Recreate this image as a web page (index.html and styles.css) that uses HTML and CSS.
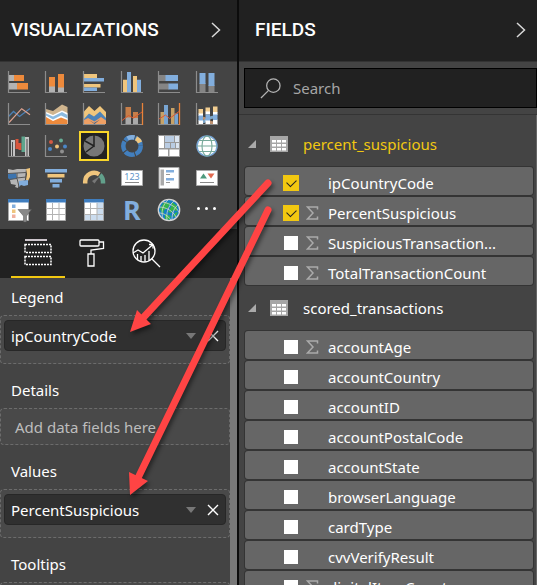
FILE: index.html
```html
<!DOCTYPE html>
<html lang="en">
<head>
<meta charset="utf-8">
<meta name="viewport" content="width=device-width, initial-scale=1">
<title>Report editor</title>
<link rel="stylesheet" href="styles.css">
</head>
<body>
<svg class="defs" width="0" height="0" aria-hidden="true">
  <symbol id="sigma" viewBox="0 0 13 14"><path d="M11.5 3.5V1H1.5L7 7 1.5 13h10v-2.500" fill="none" stroke="currentColor" stroke-width="1.500"/></symbol>
  <symbol id="chevron" viewBox="0 0 12 18"><path d="M2 2l7.500 7L2 16" fill="none" stroke="currentColor" stroke-width="1.500"/></symbol>
  <symbol id="grid" viewBox="0 0 18 16"><path fill="#a6a6a6" d="M0 0h18v16H0z"/><path fill="#fff" d="M2 4h4v2.500H2zM7 4h4v2.500H7zM12 4h4v2.500h-4zM2 8h4v2.500H2zM7 8h4v2.500H7zM12 8h4v2.500h-4zM2 12h4v2.500H2zM7 12h4v2.500H7zM12 12h4v2.500h-4z"/></symbol>
  <symbol id="axis" viewBox="0 0 24 24"><path d="M1.500 1v21.500H23" fill="none" stroke="#8c8c8c" stroke-width="1.200"/></symbol>
  <symbol id="close" viewBox="0 0 12 12"><path d="M1 1l10 10M11 1L1 11" fill="none" stroke="currentColor" stroke-width="1.400"/></symbol>
</svg>

<main class="app">
  <section class="panel visuals">
    <header class="panel-head">
      <h2>VISUALIZATIONS</h2>
      <button class="plain" aria-label="Collapse visualizations"><svg class="chevron"><use href="#chevron"/></svg></button>
    </header>

    <div class="gallery">
      <button class="viz" aria-label="Stacked bar chart"><svg viewBox="0 0 24 24"><path fill="#b3b3b3" d="M2 5h5v6H2zM2 13h8v6.500H2z"/><path fill="#ed8a3c" d="M7 5h10v6H7zM10 13h11v6.500H10z"/><use href="#axis"/></svg></button>
      <button class="viz" aria-label="Stacked column chart"><svg viewBox="0 0 24 24"><path fill="#b3b3b3" d="M5 16h6v6H5zM14 17h6v5h-6z"/><path fill="#ed8a3c" d="M5 7h6v9.500H5zM14 4h6v13.500h-6z"/><use href="#axis"/></svg></button>
      <button class="viz" aria-label="Clustered bar chart"><svg viewBox="0 0 24 24"><path fill="#efc57d" d="M2 4h13v4H2zM2 14h16.500v3.500H2z"/><path fill="#82aedd" d="M2 8h20v3.500H2zM2 17.500h13V21H2z"/><use href="#axis"/></svg></button>
      <button class="viz" aria-label="Clustered column chart"><svg viewBox="0 0 24 24"><path fill="#efc57d" d="M3 9.700h4V22H3zM13 6h4v16h-4z"/><path fill="#82aedd" d="M7 2h4v20H7zM17 9.700h4V22h-4z"/><use href="#axis"/></svg></button>
      <button class="viz" aria-label="100% stacked bar chart"><svg viewBox="0 0 24 24"><path fill="#858585" d="M2 5h7v6H2zM2 13.500h10v6H2z"/><path fill="#82aedd" d="M8.500 5H21v6H8.500zM11.500 13.500H21v6h-9.500z"/><use href="#axis"/></svg></button>
      <button class="viz" aria-label="100% stacked column chart"><svg viewBox="0 0 24 24"><path fill="#858585" d="M4.500 13h6v9h-6zM13.500 15h6v7h-6z"/><path fill="#82aedd" d="M4.500 3h6v11h-6zM13.500 3h6v13h-6z"/><use href="#axis"/></svg></button>

      <button class="viz" aria-label="Line chart"><svg viewBox="0 0 24 24"><path d="M1.500 14.500l5-5 6 5 10.500-8" fill="none" stroke="#4d80b5" stroke-width="1.300"/><path d="M2 20.500L14.700 6.700l8.300 6" fill="none" stroke="#dda290" stroke-width="1.200"/><use href="#axis"/></svg></button>
      <button class="viz" aria-label="Area chart"><svg viewBox="0 0 24 24"><path fill="#d0b58e" d="M2 7l7 2 9-6.500L23.500 5v17H2z"/><path fill="#fff" d="M2 10l7 3 9-4.500 5.500 2.500v11H2z"/><path fill="#8cbbe0" d="M2 11.500l7 3 9-4.500 5.500 3v9H2z"/><path fill="#fff" d="M2 13.500l7 4 8-4 6.500 3V22H2z"/><path fill="#ed8a3c" d="M2 15l7 4 8-3.500 6.500 2.500v4H2z"/><use href="#axis"/></svg></button>
      <button class="viz" aria-label="Stacked area chart"><svg viewBox="0 0 24 24"><path fill="#f0c67c" d="M2 9.500L7 4l5.500 5L18 4l6 6v11H2z"/><path fill="#4d83b8" d="M2 17l5-5.500 5 3 6-5 6 6.500v6H2z"/><path fill="#efa064" d="M2 22v-4l4-2 6.500 3.500L19 15l5 3.500V22z"/><path fill="#315f94" d="M7 18l5 3 6-3.500-5.500 4.500z"/><use href="#axis"/></svg></button>
      <button class="viz" aria-label="Line and stacked column chart"><svg viewBox="0 0 24 24"><path fill="#c77e49" d="M5.500 5h5.500v11H5.500zM13 10h5v7h-5z"/><path fill="#aaa" d="M5.500 15.500h5.500V22H5.500zM13 16h5v6h-5z"/><path d="M2 18.500l6.500-5 5 2.500L22 10" fill="none" stroke="#d9572e"/><use href="#axis"/><path stroke="#e8833a" stroke-width="1.300" d="M22.500 1v22"/></svg></button>
      <button class="viz" aria-label="Line and clustered column chart"><svg viewBox="0 0 24 24"><path fill="#c7a267" d="M3.500 10H7v12H3.500zM14 6h3.500v16H14z"/><path fill="#78a5d3" d="M7 3h4v19H7zM17.500 11.500h3.500V22h-3.500z"/><path d="M2 17l6.500-4 4 3.500L22 9.500" fill="none" stroke="#e05a32"/><use href="#axis"/><path stroke="#e8833a" stroke-width="1.300" d="M22.500 1v22"/></svg></button>
      <button class="viz" aria-label="Ribbon chart"><svg viewBox="0 0 24 24"><path d="M7 16c6 0 5 5 12 5" fill="none" stroke="#bf9270" stroke-width="3"/><path d="M6 20c6 0 7-5 13-5" fill="none" stroke="#7da7ca" stroke-width="3"/><path fill="#f2ce91" d="M3.500 7h4.500v5H3.500zM10.500 5.500H15V10h-4.500zM18 4.500h4.500v6H18z"/><path fill="#fff" d="M3.500 11.500h4.500V14H3.500zM10.500 9.500H15v3h-4.500zM18 10h4.500v3H18zM3.500 18h4.500v4H3.500zM10.500 18H15v4h-4.500zM18 17.500h4.500V22H18z"/><path fill="#82aedd" d="M3.500 13.500h4.500v5H3.500zM10.500 12.500H15v6h-4.500zM18 12.500h4.500v5.500H18z"/><use href="#axis"/></svg></button>

      <button class="viz" aria-label="Waterfall chart"><svg viewBox="0 0 24 24"><path fill="#c3c3c3" d="M4 6h4v16H4zM18 3h4v19h-4z"/><path fill="#4a4a4a" d="M5 8h1v14H5zM19.500 5h1v17h-1z"/><path fill="#d8563d" d="M8.500 5h3v10h-3zM11.500 9h3v7h-3z"/><path fill="#5fa58d" d="M14.500 2.500h3.500V18h-3.500z"/><use href="#axis"/></svg></button>
      <button class="viz" aria-label="Scatter chart"><svg viewBox="0 0 24 24"><circle cx="7" cy="8" r="2" fill="#d35a43"/><circle cx="17" cy="6.500" r="2" fill="#67ae96"/><circle cx="6" cy="15" r="2" fill="#4b86c6"/><circle cx="13" cy="12.500" r="2" fill="#efc27a"/><circle cx="21" cy="12.500" r="2" fill="#4b86c6"/><circle cx="18" cy="17.500" r="2" fill="#8f8f8f"/><use href="#axis"/></svg></button>
      <button class="viz selected" aria-label="Pie chart" aria-pressed="true"><svg viewBox="0 0 24 24"><circle cx="12" cy="12" r="10.500" fill="#777"/><path d="M12 1v11L3 7M12 12l-8 6" fill="none" stroke="#222" stroke-width="1.500"/></svg></button>
      <button class="viz" aria-label="Donut chart"><svg viewBox="0 0 24 24"><g fill="none" stroke-width="4.500" stroke="#427fbe" stroke-dasharray="10 1"><circle cx="12" cy="12" r="8.700"/></g><path d="M7.500 4.500A9 9 0 0 1 14.500 3.500" fill="none" stroke="#82aedd" stroke-width="4.500"/><path d="M16 4.200A9 9 0 0 1 20 8.500" fill="none" stroke="#efc57d" stroke-width="4.500"/></svg></button>
      <button class="viz" aria-label="Treemap"><svg viewBox="0 0 24 24"><path fill="#999" d="M1 1h22v22H1z"/><path fill="#fff" d="M2 2h5v12H2zM2 15.500h9V22H2zM12.500 15.500H22V22h-9.500z"/><path fill="#b9cce3" d="M8 2h9v6H8zM8 9h5v5H8zM14 9h4v5h-4z"/><path fill="#dae4f0" d="M18 2h4v6h-4zM19 9h3v5h-3z"/></svg></button>
      <button class="viz" aria-label="Map"><svg viewBox="0 0 24 24"><circle cx="12" cy="12" r="10" fill="#fff" stroke="#78a6d4" stroke-width="1.500"/><g fill="none" stroke="#77a99a" stroke-width="1.100"><ellipse cx="12" cy="12" rx="5" ry="10"/><path d="M2 12h20M4 6.500h16M4 17.500h16"/></g></svg></button>

      <button class="viz" aria-label="Filled map"><svg viewBox="0 0 24 24"><path fill="#b5b5b5" d="M1 3l5 1 4-1h9l-1 11-6 3-1 5-3-1 1-2-5-1-1-4-2-3z"/><path fill="#3c74af" d="M1 8l8-1 1 5-7 2-2-2z"/><path fill="#f0c67c" d="M19 3l4-1v9l-2 4-2-1 1-6z"/><path fill="#82aedd" d="M12 15l9-1v5l-4 1-3-1-2 2z"/><path d="M1 7.500l18-1M10 7v5l9-1M2 13.500l8-1 2 8" fill="none" stroke="#555"/></svg></button>
      <button class="viz" aria-label="Funnel"><svg viewBox="0 0 24 24"><path fill="#82aedd" d="M1 3h22v3.500H1zM6 13h12v3.500H6zM8.500 18h7v3.500h-7z"/><path fill="#efc57d" d="M3.500 8h17v3.500h-17z"/></svg></button>
      <button class="viz" aria-label="Gauge"><svg viewBox="0 0 24 24"><path d="M3.200 17.500v-2a9 9 0 0 1 14-7.200" fill="none" stroke="#efc57d" stroke-width="4.500"/><path d="M18 9a9 9 0 0 1 3 6.500v2" fill="none" stroke="#62a08b" stroke-width="4.500"/><path fill="#777" d="M10 15l8-5-5.500 7.500z"/></svg></button>
      <button class="viz" aria-label="Card"><svg viewBox="0 0 24 24"><path fill="#fff" stroke="#aaa" d="M1.500 4.500h21v15h-21z"/><text x="12" y="13.500" text-anchor="middle" class="card-number">123</text><path stroke="#888" d="M5 16.500h14"/></svg></button>
      <button class="viz" aria-label="Multi-row card"><svg viewBox="0 0 24 24"><path fill="#fff" stroke="#aaa" d="M2 1.500h20v21H2z"/><path fill="#aaa" d="M3.500 3.500H7v16H3.500z"/><path fill="#82aedd" d="M9 4h8v2.500H9zM9 12h8v2.500H9z"/><path stroke="#999" d="M9 8.500h4M9 16.500h4"/></svg></button>
      <button class="viz" aria-label="KPI"><svg viewBox="0 0 24 24"><path fill="#fff" stroke="#aaa" d="M1.500 4.500h21v15h-21z"/><path fill="#4f9a7d" d="M5 12.500l3.500-5 3.500 5z"/><path fill="#e16a50" d="M12.500 7.500h7l-3.500 5z"/><path stroke="#888" d="M5 16.500h14"/></svg></button>

      <button class="viz" aria-label="Slicer"><svg viewBox="0 0 24 24"><path fill="#fff" stroke="#aaa" d="M1.500 1.500h20v21h-20z"/><path fill="#3f7dbe" d="M1 1h21v3.500H1z"/><path fill="#82aedd" d="M5 6.500h3.500V10H5z"/><path fill="#efc57d" d="M5 11.500h3.500V15H5z"/><path fill="#efb0a0" d="M5 16.500h3.500V20H5z"/><path fill="#888" stroke="#555" stroke-width=".5" d="M11 11.500h13.500L19.500 18v6h-3v-6z"/></svg></button>
      <button class="viz" aria-label="Table"><svg viewBox="0 0 24 24"><path fill="#fff" stroke="#aaa" d="M2.500 1.500h19v21h-19z"/><path fill="#3f7dbe" d="M2 1h20v3.500H2z"/><path d="M2.500 10.500h19M2.500 16.500h19M8.500 5v17M15 5v17" stroke="#b3b3b3"/></svg></button>
      <button class="viz" aria-label="Matrix"><svg viewBox="0 0 24 24"><path fill="#fff" stroke="#aaa" d="M2.500 1.500h19v21h-19z"/><path fill="#cbdcee" d="M15 5h6v17H3v-5.500h12z"/><path fill="#3f7dbe" d="M2 1h20v3.500H2z"/><path d="M2.500 10.500h19M2.500 16.500h19M8.500 5v17M15 5v17" stroke="#b3b3b3"/></svg></button>
      <button class="viz r-script" aria-label="R script visual">R</button>
      <button class="viz" aria-label="ArcGIS map"><svg viewBox="0 0 24 24"><circle cx="12" cy="12" r="10.500" fill="#147fc4"/><path fill="#35b44a" d="M7 4l6 1-2 5-4 2-1 5-3-6zM15 4l5 4v5l-4-1-2 3-3-1 3-5zM8 16l6 2-2 4-4-1zM18 15l3-1-3 5-2-1z"/><g fill="none" stroke="#d4d4d4"><circle cx="12" cy="12" r="10.700" stroke-width="1.300"/><path stroke-width=".8" d="M6 4c8 2 13 5 16 10M2 9c7 0 14 4 17 10M2 15c5 0 9 3 12 7M12 1c-7 6-8 13-6 20M17 3c-6 5-8 12-7 19M21 7c-4 3-6 8-6 15"/></g></svg></button>
      <button class="viz" aria-label="More visuals"><svg viewBox="0 0 24 24"><g fill="#fff"><circle cx="3.500" cy="10.500" r="1.500"/><circle cx="11.500" cy="10.500" r="1.500"/><circle cx="19.500" cy="10.500" r="1.500"/></g></svg></button>
    </div>

    <nav class="tabs">
      <button class="tab active" aria-label="Fields"><svg viewBox="0 0 30 30" fill="none" stroke="#fff"><path d="M2 2h22" stroke="#cdc6cc" stroke-width="2"/><path d="M2 6.500h26v8H2zM2 18.500h26v8H2z" stroke-width="1.500" stroke-dasharray="2 1"/></svg></button>
      <button class="tab" aria-label="Format"><svg viewBox="0 0 30 30" fill="none" stroke="#fff" stroke-width="1.300"><rect x="3" y="2" width="19" height="6" rx="1"/><path d="M22 4h4.500v6.500L14 12v4M11 16h6v12h-6z"/></svg></button>
      <button class="tab" aria-label="Analytics"><svg viewBox="0 0 30 30" fill="none" stroke="#fff" stroke-width="1.300"><circle cx="13" cy="13" r="11"/><path d="M20.500 20.500L29 29M2 15l5-3 5 3L22 6.500M22 6.500h-4M22 6.500v4M6.500 16v5M10 18v5.500M14 17v6.500M18 13v9"/></svg></button>
    </nav>

    <div class="wells">
      <h3>Legend</h3>
      <div class="well">
        <div class="chip"><span>ipCountryCode</span><button class="plain caret" aria-label="ipCountryCode options"></button><button class="plain" aria-label="Remove ipCountryCode"><svg class="close"><use href="#close"/></svg></button></div>
      </div>
      <h3>Details</h3>
      <div class="well empty">Add data fields here</div>
      <h3>Values</h3>
      <div class="well">
        <div class="chip"><span>PercentSuspicious</span><button class="plain caret" aria-label="PercentSuspicious options"></button><button class="plain" aria-label="Remove PercentSuspicious"><svg class="close"><use href="#close"/></svg></button></div>
      </div>
      <h3>Tooltips</h3>
      <div class="well"></div>
    </div>
  </section>

  <section class="panel fields">
    <header class="panel-head">
      <h2>FIELDS</h2>
      <button class="plain" aria-label="Collapse fields"><svg class="chevron"><use href="#chevron"/></svg></button>
    </header>
    <div class="search-area">
      <label class="search">
        <svg viewBox="0 0 22 22" fill="none" stroke="#b5b5b5" stroke-width="1.300"><circle cx="14" cy="8" r="7"/><path d="M9 13l-8 8"/></svg>
        <input type="search" placeholder="Search" aria-label="Search">
      </label>
    </div>

    <div class="field-scroll">
      <button class="table-name current" aria-expanded="true"><i class="twisty"></i><svg class="table-icon"><use href="#grid"/></svg>percent_suspicious</button>
      <ul>
        <li><label><input type="checkbox" checked><span class="kind"></span>ipCountryCode</label></li>
        <li><label><input type="checkbox" checked><svg class="kind"><use href="#sigma"/></svg>PercentSuspicious</label></li>
        <li><label><input type="checkbox"><svg class="kind"><use href="#sigma"/></svg>SuspiciousTransaction...</label></li>
        <li><label><input type="checkbox"><svg class="kind"><use href="#sigma"/></svg>TotalTransactionCount</label></li>
      </ul>
      <button class="table-name" aria-expanded="true"><i class="twisty"></i><svg class="table-icon"><use href="#grid"/></svg>scored_transactions</button>
      <ul>
        <li><label><input type="checkbox"><svg class="kind"><use href="#sigma"/></svg>accountAge</label></li>
        <li><label><input type="checkbox"><span class="kind"></span>accountCountry</label></li>
        <li><label><input type="checkbox"><span class="kind"></span>accountID</label></li>
        <li><label><input type="checkbox"><span class="kind"></span>accountPostalCode</label></li>
        <li><label><input type="checkbox"><span class="kind"></span>accountState</label></li>
        <li><label><input type="checkbox"><span class="kind"></span>browserLanguage</label></li>
        <li><label><input type="checkbox"><span class="kind"></span>cardType</label></li>
        <li><label><input type="checkbox"><span class="kind"></span>cvvVerifyResult</label></li>
        <li><label><input type="checkbox"><svg class="kind"><use href="#sigma"/></svg>digitalItemCount</label></li>
      </ul>
    </div>
  </section>

  <svg class="arrows" width="290" height="510" viewBox="0 0 290 510" aria-hidden="true">
    <g stroke="#ff4444" stroke-width="7" stroke-linecap="round"><path d="M268 183L142 319"/><path d="M268 210L137 480"/></g>
    <path fill="#ff4444" d="M130 332l7-22 14 14zM130 495l-1-23 19 9z"/>
  </svg>
</main>
</body>
</html>
```
FILE: styles.css
```css
* { box-sizing: border-box; }

body {
  margin: 0;
  background: #444;
  color: #fff;
  font: 15px/20px "Noto Sans", "Open Sans", sans-serif;
}

.defs { position: absolute; }

button {
  margin: 0;
  padding: 0;
  border: 0;
  background: none;
  color: inherit;
  font: inherit;
}

.app {
  position: relative;
  display: grid;
  grid-template-columns: 239px minmax(0, 1fr);
  height: 100vh;
  overflow: hidden;
}

.panel {
  display: flex;
  flex-direction: column;
  min-height: 0;
  overflow: hidden;
}

.visuals { border-right: 2px solid #0c0c0c; }

.panel-head {
  display: flex;
  flex: none;
  align-items: center;
  justify-content: space-between;
  height: 62px;
  padding: 0 15px 2px 11px;
  background: #212121;
  border-bottom: 1px solid #333;
}

.fields .panel-head { padding: 0 10px 2px 16px; }

h2 {
  margin: 0;
  font: 500 19px/24px Roboto, sans-serif;
}

.plain { display: flex; align-items: center; }

.chevron { width: 12px; height: 18px; color: #d8d8d8; }

/* Chart gallery */
.gallery {
  display: grid;
  flex: none;
  grid-template-columns: repeat(6, 1fr);
  grid-auto-rows: 32px;
  place-items: center;
  padding: 4px 11px 3px 0;
}

.viz {
  display: grid;
  place-items: center;
  width: 30px;
  height: 30px;
}

.viz svg { width: 24px; height: 24px; overflow: visible; }

.viz.selected { background: #222; border: 2px solid #f9d62a; }

.card-number { font: 9px "Noto Sans", sans-serif; fill: #5f93c8; }

.r-script { color: #82aedd; font: 700 27px/30px "Noto Sans", sans-serif; }

/* Tabs */
.tabs {
  display: flex;
  flex: none;
  height: 49px;
  padding-left: 11px;
  background: #212121;
}

.tab {
  display: grid;
  place-items: center;
  width: 54px;
  border-bottom: 2px solid transparent;
}

.tab.active { border-color: #f2c811; }

.tab svg { width: 30px; height: 30px; }

/* Field wells */
.wells {
  flex: 1;
  min-height: 0;
  padding-top: 1px;
  overflow: hidden;
  border-right: 7px solid #787878;
}

h3 {
  margin: 0;
  padding-left: 11px;
  font-size: 15px;
  font-weight: 400;
  line-height: 36px;
}

.well {
  margin-bottom: 8px;
  padding: 4px 3px 12px;
  border: 1px dashed #6c6c6c;
  border-radius: 4px;
  background: #494949;
}

.well.empty { padding: 8px 14px 7px; color: #bdbdbd; }

.chip {
  display: flex;
  align-items: center;
  height: 31px;
  padding: 0 6px;
  border: 1px solid #272727;
  border-radius: 4px;
  background: #303030;
}

.chip span { flex: 1; }

.caret {
  margin-right: 11px;
  border: 5px solid transparent;
  border-top: 6px solid #777;
  border-bottom: 0;
}

.close { width: 12px; height: 12px; }

/* Field list */
.search-area {
  flex: none;
  padding: 6px 0 6px 5px;
  border-bottom: 1px solid #343434;
}

.search {
  display: flex;
  align-items: center;
  gap: 12px;
  height: 40px;
  padding-left: 15px;
  border: 1px solid #000;
  background: #212121;
}

.search svg { width: 21px; height: 21px; }

.search input {
  flex: 1;
  min-width: 0;
  padding: 0;
  border: 0;
  outline: 0;
  background: none;
  color: #fff;
  font: inherit;
}

.search input::placeholder { color: #a6a6a6; }

.field-scroll {
  flex: 1;
  min-height: 0;
  padding: 6px 3px 0 6px;
  overflow: hidden;
  border-right: 1px solid #666;
}

.table-name {
  display: flex;
  align-items: center;
  width: 100%;
  height: 46px;
  padding-left: 3px;
  text-align: left;
}

.current { color: #f2c811; }

.twisty {
  border-left: 8px solid transparent;
  border-bottom: 8px solid #aaa;
}

.table-icon { width: 18px; height: 16px; margin: 0 15px 0 14px; }

ul {
  display: grid;
  gap: 2px;
  margin: 0;
  padding: 0;
  list-style: none;
}

li {
  border-radius: 3px;
  background: #666;
  box-shadow: 0 0 0 1px #343434;
}

li label {
  display: flex;
  align-items: center;
  height: 28px;
  padding: 4px 0 0 38px;
}

input[type="checkbox"] {
  appearance: none;
  display: grid;
  place-items: center;
  width: 16px;
  height: 16px;
  margin: 0;
  border: 1px solid #666;
  background: #fff;
}

input[type="checkbox"]:checked { border-color: #f2c811; background: #f2c811; }

input[type="checkbox"]:checked::after {
  content: "";
  width: 8px;
  height: 5px;
  margin-bottom: 3px;
  border: solid #222;
  border-width: 0 0 1px 1px;
  rotate: -45deg;
}

.kind { width: 13px; height: 14px; margin: 0 9px 0 7px; color: #aaa; }

/* Callouts from the fields to their wells */
.arrows {
  position: absolute;
  top: 0;
  left: 0;
  pointer-events: none;
  filter: drop-shadow(2px 3px 2px rgb(0 0 0 / 45%));
}
```
